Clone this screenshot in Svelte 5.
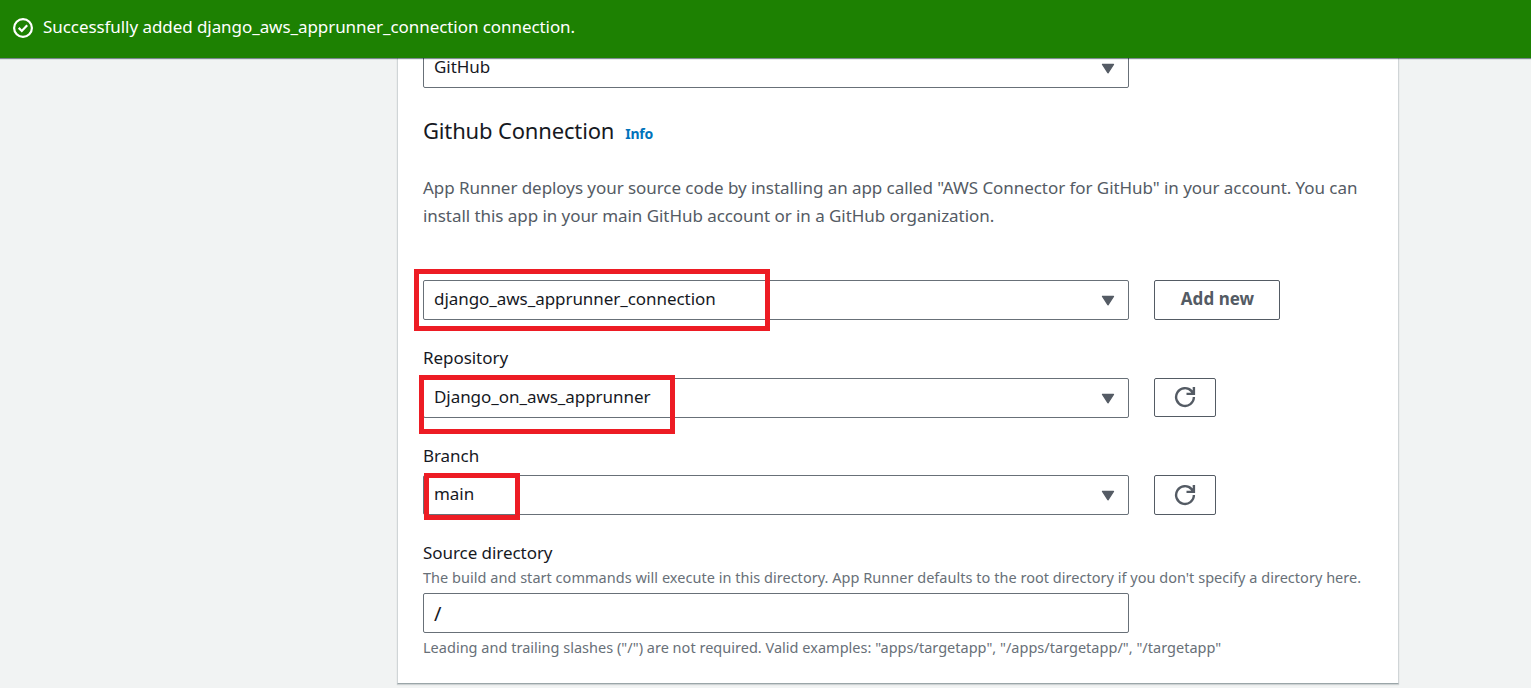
<script>
  const repository = 'Django_on_aws_apprunner';
  const branch = 'main';
</script>

{#snippet caret()}
  <svg class="caret" width="14" height="12" viewBox="0 0 14 12" aria-hidden="true">
    <path d="M1.5 1.3h11L7 9.8z" fill="#545b64" stroke="#545b64" stroke-width="1.3" stroke-linejoin="round" />
  </svg>
{/snippet}

{#snippet refresh()}
  <svg width="22" height="22" viewBox="0 0 22 22" fill="none" stroke="#545b64" stroke-width="2.4" aria-hidden="true">
    <path d="M19.9 11A8.9 8.9 0 1 1 17.6 5.1L19.2 7.2" />
    <path d="M19.9 1v6.9h-7.4" />
    <path d="M16.5 6.5l3 -3v4z" fill="#545b64" stroke="none" />
  </svg>
{/snippet}

<div class="page">
  <header class="flash">
    <svg width="22" height="22" viewBox="0 0 22 22" fill="none" stroke="#fff" stroke-width="2.2" aria-hidden="true">
      <circle cx="11" cy="11" r="8.9" />
      <path d="M6.7 10.9l3.1 3.1 5.4-5.7" />
    </svg>
    <span class="flash-text">Successfully added django_aws_apprunner_connection connection.</span>
  </header>

  <main class="card">
    <div class="select provider"><span>GitHub</span>{@render caret()}</div>

    <div class="heading">
      <h2>Github Connection</h2>
      <a class="info" href="#info">Info</a>
    </div>

    <p class="description">
      App Runner deploys your source code by installing an app called "AWS Connector for GitHub" in your account. You can<br />
      install this app in your main GitHub account or in a GitHub organization.
    </p>

    <div class="row connection">
      <div class="select"><span>django_aws_apprunner_connection</span>{@render caret()}<i class="mark mark-conn"></i></div>
      <button class="add"><span>Add new</span></button>
    </div>

    <div class="label l-repo"><span>Repository</span></div>
    <div class="row">
      <div class="select"><span>{repository}</span>{@render caret()}<i class="mark mark-repo"></i></div>
      <button class="icon short" aria-label="Refresh">{@render refresh()}</button>
    </div>

    <div class="label l-branch"><span>Branch</span></div>
    <div class="row">
      <div class="select"><span>{branch}</span>{@render caret()}<i class="mark mark-branch"></i></div>
      <button class="icon" aria-label="Refresh">{@render refresh()}</button>
    </div>

    <div class="label l-dir"><span>Source directory</span></div>
    <div class="hint h-top">The build and start commands will execute in this directory. App Runner defaults to the root directory if you don't specify a directory here.</div>
    <div class="select input"><span>/</span></div>
    <div class="hint h-bottom">Leading and trailing slashes ("/") are not required. Valid examples: "apps/targetapp", "/apps/targetapp/", "/targetapp"</div>
  </main>
</div>

<style>
  :global(body) { background: #f1f3f3; }
  .page {
    height: 688px;
    overflow: hidden;
    background: #f1f3f3;
    font-family: 'Noto Sans', sans-serif;
    font-size: 17px;
    color: #16191f;
    white-space: nowrap;
    letter-spacing: -0.055px;
  }
  .page * { box-sizing: border-box; }
  .flash {
    position: relative;
    z-index: 2;
    display: flex;
    align-items: center;
    gap: 9px;
    height: 58px;
    padding: 0 12px 4px;
    background: #1d8102;
    color: #fff;
    box-shadow: 0 1px 1px rgba(0, 28, 36, 0.5);
  }
  .flash svg { position: relative; top: 1px; }
  .flash-text { letter-spacing: -0.065px; padding-bottom: 1px; }
  .card {
    display: flex;
    flex-direction: column;
    width: 1002px;
    height: 626px;
    margin-left: 397px;
    padding-left: 25px;
    background: #fff;
    border: 1px solid #d0d5d7;
    border-top: 0;
    border-bottom-color: #9aa5a8;
    box-shadow: 0 1px 1px rgba(0, 28, 36, 0.15);
  }
  .select {
    position: relative;
    display: flex;
    flex: none;
    align-items: center;
    justify-content: space-between;
    width: 706px;
    height: 40px;
    padding: 0 13px 4px 10px;
    border: 1px solid #687078;
    border-radius: 2px;
    background: #fff;
  }
  .input { font-size: 20px; padding-bottom: 0; }
  .provider { margin-top: -10px; }
  .caret { position: relative; top: 2.5px; }
  .heading {
    display: flex;
    align-items: baseline;
    gap: 11px;
    height: 30px;
    margin-top: 27px;
    line-height: 30px;
  }
  h2 { margin: 0; font-size: 22px; font-weight: 400; letter-spacing: -0.16px; }
  .info { color: #0073bb; font-size: 14px; font-weight: 700; text-decoration: none; letter-spacing: -0.25px; }
  .description { margin: 29px 0 0; height: 56px; line-height: 28px; color: #545b64; }
  .row { display: flex; flex: none; gap: 25px; height: 40px; }
  .connection { margin-top: 50px; }
  button {
    display: flex;
    align-items: center;
    justify-content: center;
    height: 40px;
    padding: 0;
    border: 1px solid #545b64;
    border-radius: 2px;
    background: #fff;
    color: #545b64;
    font: 700 17px 'Noto Sans', sans-serif;
  }
  .add { width: 126px; padding: 0 0 3px 1px; letter-spacing: 0.05px; }
  .icon { width: 62px; padding-bottom: 1px; }
  .short { height: 39px; }
  .label { flex: none; line-height: 28px; height: 34px; margin-top: 24px; }
  .l-branch { height: 33px; }
  .l-dir { height: 26px; }
  .hint { flex: none; color: #687078; font-size: 14.5px; line-height: 20px; letter-spacing: 0.025px; }
  .h-top { margin: 2px 0 6px; height: 20px; }
  .h-bottom { margin-top: 4px; letter-spacing: 0.015px; }
  .mark { position: absolute; border: 5px solid #ed1c24; }
  .mark-conn { left: -10px; top: -12px; width: 356px; height: 62px; }
  .mark-repo { left: -5px; top: -4px; width: 256px; height: 59px; }
  .mark-branch { left: 0; top: -3px; width: 96px; height: 47px; }
</style>
